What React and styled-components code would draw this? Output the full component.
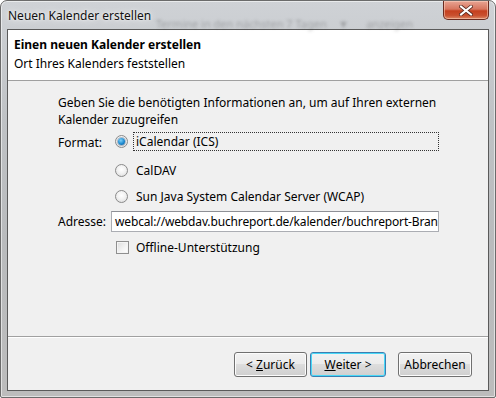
import React from "react";
import styled, { createGlobalStyle } from "styled-components";

const Global = createGlobalStyle`
  html, body { margin: 0; padding: 0; background: #ffffff; }
  body { font-family: "Noto Sans", "Liberation Sans", sans-serif; font-size: 12px; color: #000; }
  * { box-sizing: border-box; }
`;

const Window = styled.div`
  width: 496px;
  height: 398px;
  display: flex;
  flex-direction: column;
  border: 1px solid #6b6b6b;
  border-radius: 7px 7px 2px 2px;
  background: linear-gradient(180deg, #cfd2d6 0%, #bfc2c5 30%, #b9bbbd 60%, #bcbcbc 100%);
  box-shadow: inset 0 0 0 1px rgba(255,255,255,0.55);
  overflow: hidden;
`;

const TitleBar = styled.div`
  height: 28px;
  flex: none;
  display: flex;
  align-items: flex-start;
  justify-content: space-between;
  padding-left: 7px;
  position: relative;
`;

const TitleText = styled.div`
  margin-top: 6px;
  font-size: 12px;
  color: #111;
  position: relative;
  z-index: 1;
  text-shadow: 0 0 8px rgba(255,255,255,0.95), 0 0 3px rgba(255,255,255,0.9);
`;

const GhostText = styled.div`
  position: absolute;
  left: 155px;
  top: 15px;
  font-size: 11px;
  color: rgba(60,60,60,0.3);
  filter: blur(1.4px);
  white-space: pre;
  pointer-events: none;
`;

const CloseButton = styled.div`
  width: 46px;
  height: 19px;
  margin-right: 6px;
  border: 1px solid #6a2b20;
  border-top: none;
  border-radius: 0 0 5px 5px;
  background: linear-gradient(180deg, #e8a493 0%, #d7765f 45%, #c5401f 55%, #c9502f 80%, #dc8866 100%);
  box-shadow: inset 0 0 0 1px rgba(255,220,200,0.5);
  display: flex;
  align-items: center;
  justify-content: center;
  z-index: 1;
`;

const Client = styled.div`
  flex: 1;
  margin: 0 6px 6px 6px;
  border: 1px solid #5a5a5a;
  background: #f0f0f0;
  display: flex;
  flex-direction: column;
`;

const Header = styled.div`
  height: 51px;
  flex: none;
  background: #ffffff;
  border-bottom: 1px solid #a0a0a0;
  padding: 5px 0 0 6px;
  display: flex;
  flex-direction: column;
`;

const HeaderTitle = styled.div`
  font-weight: bold;
  font-size: 12px;
  line-height: 19px;
`;

const HeaderSub = styled.div`
  font-size: 12px;
  line-height: 19px;
`;

const Body = styled.div`
  flex: 1;
  padding: 13px 0 0 50px;
  display: flex;
  flex-direction: column;
`;

const Intro = styled.div`
  line-height: 17px;
  width: 380px;
  margin-bottom: 2px;
`;

const Grid = styled.div`
  display: grid;
  grid-template-columns: 53px 328px;
  align-items: center;
`;

const Label = styled.div`
  line-height: 20px;
  align-self: ${(p) => (p.top ? "start" : "center")};
  padding-top: ${(p) => (p.top ? "3px" : "0")};
`;

const Options = styled.div`
  display: flex;
  flex-direction: column;
`;

const OptionRow = styled.div`
  height: ${(p) => (p.first ? 27 : 26)}px;
  display: flex;
  align-items: ${(p) => (p.first ? "flex-start" : "center")};
  padding-top: ${(p) => (p.first ? "2px" : "0")};
  padding-left: 4px;
`;

const RadioCircle = styled.span`
  width: 13px;
  height: 13px;
  border-radius: 50%;
  flex: none;
  margin-top: ${(p) => (p.first ? "3px" : "0")};
  border: 1px solid #8a8a8a;
  background: radial-gradient(circle at 50% 40%, #ffffff 0%, #f2f2f2 45%, #d8d8d8 100%);
  display: flex;
  align-items: center;
  justify-content: center;
`;

const RadioDot = styled.span`
  width: 7px;
  height: 7px;
  border-radius: 50%;
  background: radial-gradient(circle at 40% 35%, #7fd0f8 0%, #1d8ad0 55%, #0b4f8a 100%);
  box-shadow: 0 0 0 1px rgba(40,80,120,0.35);
`;

const OptionLabel = styled.span`
  margin-left: 5px;
  padding: 0 2px;
  line-height: 17px;
  border: 1px dotted ${(p) => (p.focused ? "#333" : "transparent")};
  flex: ${(p) => (p.focused ? "1" : "none")};
`;

const Input = styled.div`
  height: 21px;
  border: 1px solid #abadb3;
  border-top-color: #8e9096;
  background: #ffffff;
  padding: 0 3px;
  line-height: 19px;
  letter-spacing: -0.15px;
  white-space: nowrap;
  overflow: hidden;
  margin: 2px 0 2px;
`;

const CheckRow = styled.div`
  grid-column: 2;
  height: 26px;
  display: flex;
  align-items: center;
  padding-left: 5px;
`;

const CheckBox = styled.span`
  width: 13px;
  height: 13px;
  flex: none;
  border: 1px solid #8f8f8f;
  background: linear-gradient(135deg, #dcdcdc 0%, #f4f4f4 60%, #ffffff 100%);
  box-shadow: inset 0 0 0 1px #f4f4f4;
`;

const CheckLabel = styled.span`
  margin-left: 7px;
`;

const Footer = styled.div`
  height: 54px;
  flex: none;
  border-top: 1px solid #a0a0a0;
  box-shadow: inset 0 1px 0 #ffffff;
  display: flex;
  align-items: center;
  justify-content: flex-end;
  padding: 1px 16px 0 0;
`;

const Button = styled.div`
  height: 25px;
  width: ${(p) => p.w}px;
  margin-left: ${(p) => p.gap}px;
  border: 1px solid ${(p) => (p.primary ? "#3c7fb1" : "#707070")};
  border-radius: 3px;
  background: linear-gradient(180deg, #f2f2f2 0%, #ebebeb 49%, #dddddd 50%, #cfcfcf 100%);
  box-shadow: inset 0 0 0 1px ${(p) => (p.primary ? "#48d8f8" : "#fcfcfc")};
  display: flex;
  align-items: center;
  justify-content: center;
  font-size: 12px;
`;

const Under = styled.span`
  text-decoration: underline;
`;

function Radio({ checked, first }) {
  return <RadioCircle first={first}>{checked && <RadioDot />}</RadioCircle>;
}

export default function App() {
  return (
    <>
      <Global />
      <Window>
        <TitleBar>
          <TitleText>Neuen Kalender erstellen</TitleText>
          <GhostText>{"Termine in den nächsten 7 Tagen    ▼      anzeigen"}</GhostText>
          <CloseButton>
            <svg width="14" height="11" viewBox="0 0 14 11">
              <path d="M2 1.5 L12 9.5 M12 1.5 L2 9.5" stroke="#5a2a20" strokeWidth="3.6" strokeLinecap="square" />
              <path d="M2 1.5 L12 9.5 M12 1.5 L2 9.5" stroke="#ffffff" strokeWidth="2" strokeLinecap="square" />
            </svg>
          </CloseButton>
        </TitleBar>
        <Client>
          <Header>
            <HeaderTitle>Einen neuen Kalender erstellen</HeaderTitle>
            <HeaderSub>Ort Ihres Kalenders feststellen</HeaderSub>
          </Header>
          <Body>
            <Intro>
              Geben Sie die benötigten Informationen an, um auf Ihren externen Kalender zuzugreifen
            </Intro>
            <Grid>
              <Label top>Format:</Label>
              <Options>
                <OptionRow first>
                  <Radio checked first />
                  <OptionLabel focused>iCalendar (ICS)</OptionLabel>
                </OptionRow>
                <OptionRow>
                  <Radio />
                  <OptionLabel>CalDAV</OptionLabel>
                </OptionRow>
                <OptionRow>
                  <Radio />
                  <OptionLabel>Sun Java System Calendar Server (WCAP)</OptionLabel>
                </OptionRow>
              </Options>
              <Label>Adresse:</Label>
              <Input>webcal://webdav.buchreport.de/kalender/buchreport-Branchentermine.ics</Input>
              <CheckRow>
                <CheckBox />
                <CheckLabel>Offline-Unterstützung</CheckLabel>
              </CheckRow>
            </Grid>
          </Body>
          <Footer>
            <Button w={73} gap={0}>&lt;&nbsp;<Under>Z</Under>urück</Button>
            <Button w={76} gap={3} primary><Under>W</Under>eiter &gt;</Button>
            <Button w={74} gap={12}>Abbrechen</Button>
          </Footer>
        </Client>
      </Window>
    </>
  );
}
